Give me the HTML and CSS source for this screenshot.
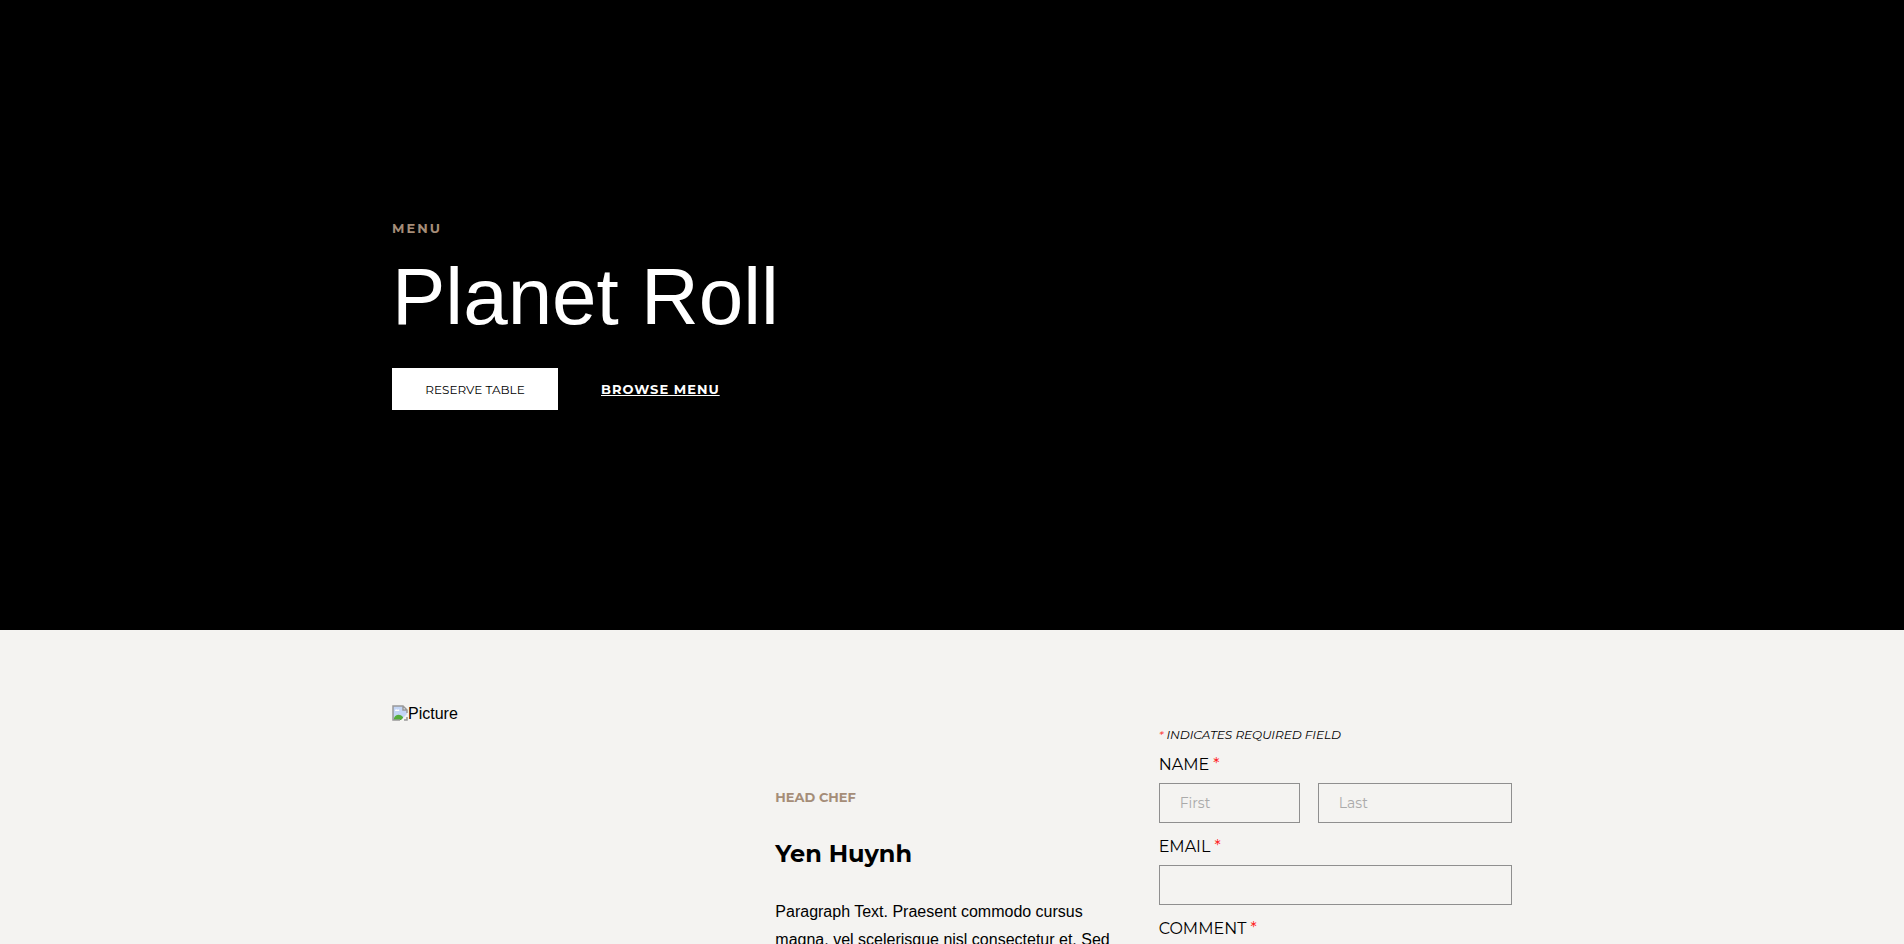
FILE: index.html
```
<!DOCTYPE html>
<html lang="en">
<head>
    <meta charset="UTF-8">
    <meta name="viewport" content="width=device-width, initial-scale=1.0">
    <title>Planet Roll</title>
    <link rel="stylesheet" href="styles.css">
</head>
<body>
    <header class="hero">
        <div class="container">
            <p class="eyebrow hero-eyebrow">MENU</p>
            <h1>Planet Roll</h1>
            <div class="hero-actions">
                <button type="button" class="button">RESERVE TABLE</button>
                <a href="#menu" class="browse-link">BROWSE MENU</a>
            </div>
        </div>
    </header>
    <main class="about">
        <div class="container columns">
            <div class="picture">
                <svg width="16" height="16" viewBox="0 0 16 16" aria-hidden="true">
                    <path d="M1 1h10l4 4v10H1z" fill="#c3d5f5"/>
                    <path d="M3 6c0-2 2-2 2-1 2-1 3 0 2 1z" fill="#fff"/>
                    <path d="M2 15v-2c2-4 6-4 9-1v3z" fill="#55ad3b"/>
                    <path d="M11 1v4h4z" fill="#fff"/>
                    <path d="M8 16L16 8v4l-4 4z" fill="#f4f3f1"/>
                    <path d="M8 15H1V1h10l4 4v3M11 1v4h4M15 12v3h-3" fill="none" stroke="#999" stroke-width="1.500"/>
                </svg>
                <span>Picture</span>
            </div>
            <div class="chef">
                <p class="eyebrow">HEAD CHEF</p>
                <h2>Yen Huynh</h2>
                <p class="bio">Paragraph Text. Praesent commodo cursus magna, vel scelerisque nisl consectetur et. Sed</p>
            </div>
            <form class="contact">
                <p class="required-note"><span class="star">*</span> INDICATES REQUIRED FIELD</p>
                <label for="firstName">NAME <span class="star">*</span></label>
                <div class="name-row">
                    <input type="text" id="firstName" placeholder="First">
                    <input type="text" id="lastName" placeholder="Last" aria-label="Last name">
                </div>
                <label for="email">EMAIL <span class="star">*</span></label>
                <input type="email" id="email">
                <label for="comment">COMMENT <span class="star">*</span></label>
                <textarea id="comment" rows="6"></textarea>
            </form>
        </div>
    </main>
</body>
</html>
```
FILE: styles.css
```
* {
    box-sizing: border-box;
}

body {
    margin: 0;
    font-family: "Liberation Sans", Arial, sans-serif;
    font-size: 16px;
    color: #000;
    background-color: #f4f3f1;
}

h1, h2, p {
    margin: 0;
}

.container {
    width: 100%;
    max-width: 1150px;
    margin: 0 auto;
    padding: 0 15px;
}

.hero {
    display: flex;
    align-items: center;
    min-height: 630px;
    padding-bottom: 2px;
    background-color: #000;
    color: #fff;
}

.eyebrow {
    font-family: Montserrat, Inter, sans-serif;
    font-size: 13px;
    font-weight: 700;
    line-height: 20px;
    color: #a58d78;
}

.hero-eyebrow {
    letter-spacing: 2px;
}

h1 {
    margin: 12px 0 24px;
    font-size: 80px;
    font-weight: 400;
    line-height: 94px;
}

.hero-actions {
    display: flex;
    align-items: center;
    gap: 43px;
}

.button {
    min-width: 166px;
    height: 42px;
    padding: 0 30px;
    border: none;
    background-color: #fff;
    color: #000;
    font-family: Montserrat, Inter, sans-serif;
    font-size: 12px;
    cursor: pointer;
}

.browse-link {
    color: #fff;
    font-family: Montserrat, Inter, sans-serif;
    font-size: 13px;
    font-weight: 700;
    letter-spacing: 1px;
}

.about {
    padding: 75px 0;
}

.columns {
    display: grid;
    grid-template-columns: repeat(3, 1fr);
    gap: 30px;
}

.picture {
    display: flex;
    align-items: flex-start;
    line-height: 18px;
}

.chef {
    padding-top: 82px;
}

h2 {
    margin: 31px 0 28px;
    font-family: Montserrat, Inter, sans-serif;
    font-size: 24px;
    line-height: 32px;
}

.bio {
    line-height: 28px;
}

.contact {
    padding-top: 20px;
    font-family: Montserrat, Inter, sans-serif;
}

.required-note {
    font-size: 12px;
    font-style: italic;
    line-height: 20px;
}

.star {
    color: #f22;
}

.contact label {
    display: block;
    padding: 10px 0 8px;
    line-height: 20px;
}

.name-row {
    display: grid;
    grid-template-columns: 40fr 55fr;
    gap: 18px;
}

input, textarea {
    display: block;
    width: 100%;
    padding: 0 20px;
    border: 1px solid #8f8f8f;
    border-radius: 0;
    background: transparent;
    font-family: inherit;
    font-size: 14px;
}

input {
    height: 40px;
    margin-bottom: 4px;
}

input::placeholder {
    color: #aaa;
}
```
